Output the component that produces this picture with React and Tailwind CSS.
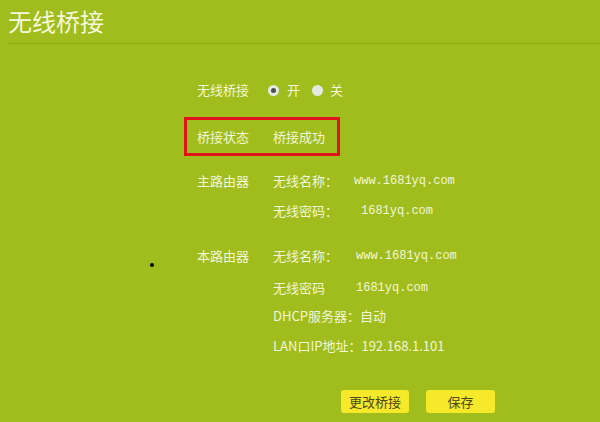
import React from "react";

const cjk = { fontFamily: '"Noto Sans CJK SC", "Noto Sans", sans-serif' };
const mono = { fontFamily: '"Liberation Mono", "DejaVu Sans Mono", monospace' };

function Row({ label, children, className = "" }) {
  return (
    <div className={"flex h-[30px] items-center " + className}>
      <div className="w-[76px] shrink-0">{label}</div>
      <div className="flex items-center">{children}</div>
    </div>
  );
}

function Field({ name, value, offset = "" }) {
  return (
    <div className="flex items-center">
      <span className="w-[81px] shrink-0">{name}</span>
      <span className={"text-[12px] " + offset} style={mono}>{value}</span>
    </div>
  );
}

export default function App() {
  return (
    <div className="relative h-[422px] w-[600px] overflow-hidden bg-[#a0bd1d] text-[13px] text-[#f3f6d6]" style={cjk}>
      <div className="flex h-[43px] items-center px-2 pb-[2px] text-[24px] leading-none text-[#f5f8dc]">无线桥接</div>
      <div className="ml-2 h-px bg-[#8ba815]" />

      <div className="ml-[197px] mt-[31px] flex flex-col">
        <Row label="无线桥接">
          <span className="-ml-[5px] flex h-[11px] w-[11px] items-center justify-center rounded-full bg-[#e6e8e2]">
            <span className="h-[5px] w-[5px] rounded-full bg-[#4d5050]" />
          </span>
          <span className="ml-[8px]">开</span>
          <span className="ml-[12px] h-[11px] w-[11px] rounded-full bg-[#e6e8e2]" />
          <span className="ml-[7px]">关</span>
        </Row>

        <div className="-ml-[13px] mt-[12px] flex h-[39px] w-[156px] items-center border-[3px] border-[#e2141b] pl-[10px]">
          <div className="w-[76px] shrink-0">桥接状态</div>
          <div>桥接成功</div>
        </div>

        <div className="mt-[10px] flex">
          <div className="flex h-[30px] w-[76px] shrink-0 items-center">主路由器</div>
          <div className="flex flex-col">
            <div className="flex h-[30px] items-center"><Field name="无线名称：" value="www.1681yq.com" /></div>
            <div className="flex h-[30px] items-center"><Field name="无线密码：" value="1681yq.com" offset="ml-[7px]" /></div>
          </div>
        </div>

        <div className="mt-[15px] flex">
          <div className="flex h-[30px] w-[76px] shrink-0 items-center">本路由器</div>
          <div className="flex flex-col">
            <div className="flex h-[30px] items-center"><Field name="无线名称：" value="www.1681yq.com" offset="ml-[2px]" /></div>
            <div className="flex h-[30px] items-center pt-[3px]"><Field name="无线密码" value="1681yq.com" offset="ml-[2px]" /></div>
            <div className="flex h-[30px] items-center">DHCP服务器：自动</div>
            <div className="flex h-[30px] items-center">LAN口IP地址：192.168.1.101</div>
          </div>
        </div>
      </div>

      <div className="ml-[341px] mt-[29px] flex gap-[17px]">
        <button className="flex h-[23px] w-[68px] items-center justify-center rounded-[3px] bg-[#f6e92a] text-[13px] text-[#4a4718]">更改桥接</button>
        <button className="flex h-[23px] w-[69px] items-center justify-center rounded-[3px] bg-[#f6e92a] text-[13px] text-[#4a4718]">保存</button>
      </div>

      <span className="absolute left-[150px] top-[263px] h-[4px] w-[4px] rounded-full bg-black" />
    </div>
  );
}
